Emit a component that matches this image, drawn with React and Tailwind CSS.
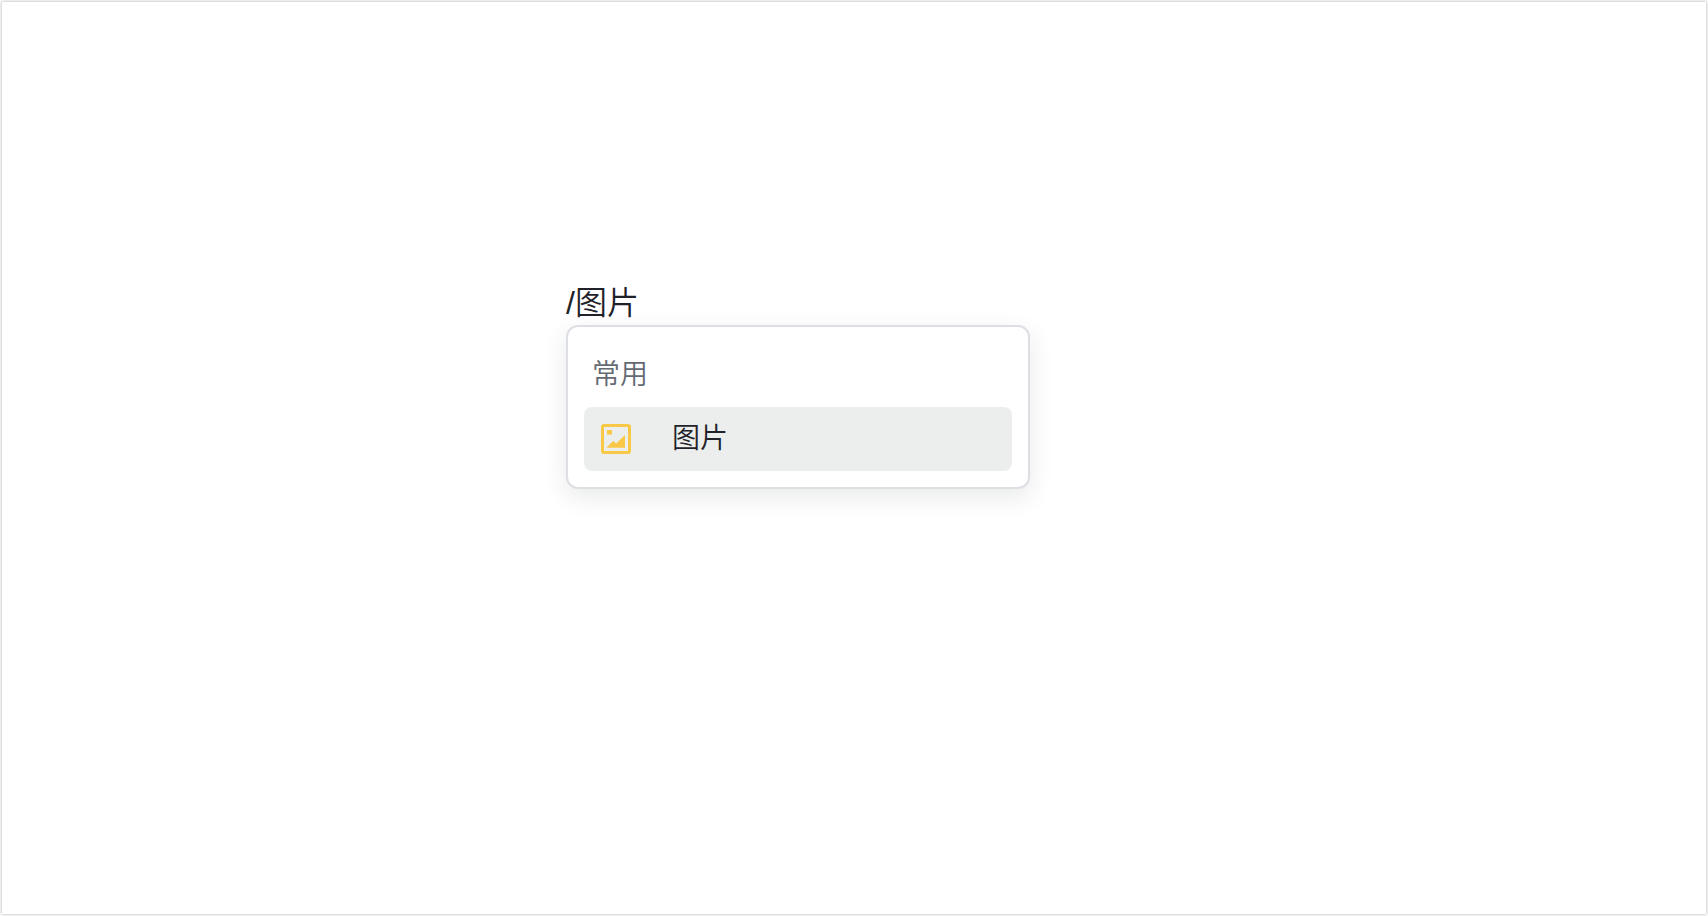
import React, { useState } from 'react';

const GROUPS = [
  { id: 'common', label: '常用', items: [{ id: 'image', label: '图片', icon: <ImageIcon /> }] },
];

function ImageIcon() {
  return (
    <svg width="32" height="32" viewBox="0 0 32 32" fill="none" aria-hidden="true" className="shrink-0 text-[#f9c846]">
      <rect x="2.5" y="2.5" width="27" height="27" rx="1.6" stroke="currentColor" strokeWidth="3" />
      <rect x="7" y="7" width="5" height="4.6" fill="currentColor" />
      <path d="M6.8 24.8 V24.2 L12.6 18.4 Q13.2 17.7 13.9 18.4 L16.2 20.6 L25 12 V24.8 Z" fill="currentColor" />
    </svg>
  );
}

const App = () => {
  const [query, setQuery] = useState('/图片');
  const [activeItem, setActiveItem] = useState('image');

  return (
    <div className="min-h-screen flex bg-[#fafafa] p-[2px] font-['Liberation_Sans','Noto_Sans_CJK_SC',sans-serif] font-[350] text-[#1f2329]">
      <main className="flex-1 bg-white pt-[279px] shadow-[0_0_3px_rgba(0,0,0,0.3)]">
        <div className="mx-auto max-w-xl">
          <input
            type="text"
            aria-label="输入命令"
            value={query}
            onChange={(e) => setQuery(e.target.value)}
            className="block h-11 w-full bg-transparent text-[32px] outline-none"
          />

          {/* Slash command menu */}
          <div className="w-[464px] max-w-full rounded-xl border-2 border-[#dedfe4] bg-white p-4 shadow-[0_8px_24px_rgba(31,35,41,0.1)]">
            {GROUPS.map((group) => (
              <section key={group.id}>
                <h2 className="flex h-16 items-center px-2 text-[28px] font-[350] text-[#646a73]">{group.label}</h2>
                {group.items.map((item) => (
                  <button
                    key={item.id}
                    type="button"
                    onMouseEnter={() => setActiveItem(item.id)}
                    className={`flex h-16 w-full items-center gap-10 rounded-lg px-4 text-[28px] ${
                      activeItem === item.id ? 'bg-[#eceeed]' : 'bg-white'
                    }`}
                  >
                    {item.icon}
                    <span>{item.label}</span>
                  </button>
                ))}
              </section>
            ))}
          </div>
        </div>
      </main>
    </div>
  );
};

export default App;
